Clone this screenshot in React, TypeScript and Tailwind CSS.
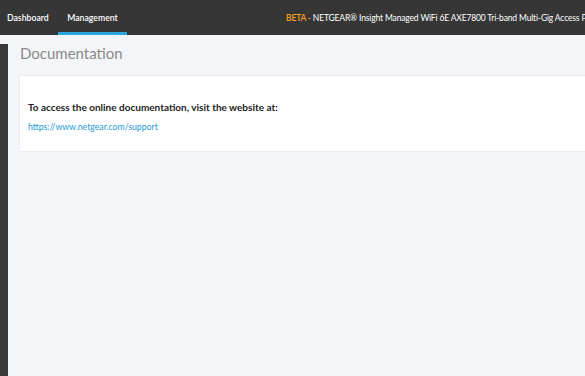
import * as React from 'react';

const font = { fontFamily: 'Lato, "Noto Sans", sans-serif' };

function TopBar() {
  return (
    <header className="flex h-[35px] items-stretch overflow-hidden bg-[#363636] text-[8.7px] font-semibold text-white">
      <nav className="flex shrink-0">
        <a className="flex w-[58px] items-center pl-[7px] pt-[1px]">Dashboard</a>
        <a className="flex w-[69px] items-center justify-center border-b-[3px] border-[#2ba6dc] pt-[4px]">
          Management
        </a>
      </nav>
      <div className="ml-[159px] flex shrink-0 items-center whitespace-nowrap pt-[1px] text-[8.5px] font-normal tracking-[-0.15px]">
        <span className="font-semibold text-[#f7a21b]">BETA -&nbsp;</span>
        <span>NETGEAR® Insight Managed WiFi 6E AXE7800 Tri-band Multi-Gig Access Point</span>
      </div>
    </header>
  );
}

export default function App() {
  return (
    <div style={font} className="flex h-[376px] w-[585px] flex-col overflow-hidden bg-[#f4f5f9]">
      <TopBar />
      <div className="flex flex-1 pt-[9px]">
        <aside className="w-[8px] shrink-0 bg-[#3a3a3a]" />
        <main className="min-w-0 flex-1 pl-[11px]">
          <h1 className="ml-[1px] text-[15px] leading-[18px] text-[#8a8a8a]">Documentation</h1>
          <section className="mt-[13px] w-[600px] border border-[#ebecef] bg-white pl-[8px] pt-[24px] pb-[18px]">
            <p className="text-[10px] font-bold text-[#222]">
              To access the online documentation, visit the website at:
            </p>
            <a className="mt-[5px] block text-[8.7px] text-[#1c9ad6]">https://www.netgear.com/support</a>
          </section>
        </main>
      </div>
    </div>
  );
}
